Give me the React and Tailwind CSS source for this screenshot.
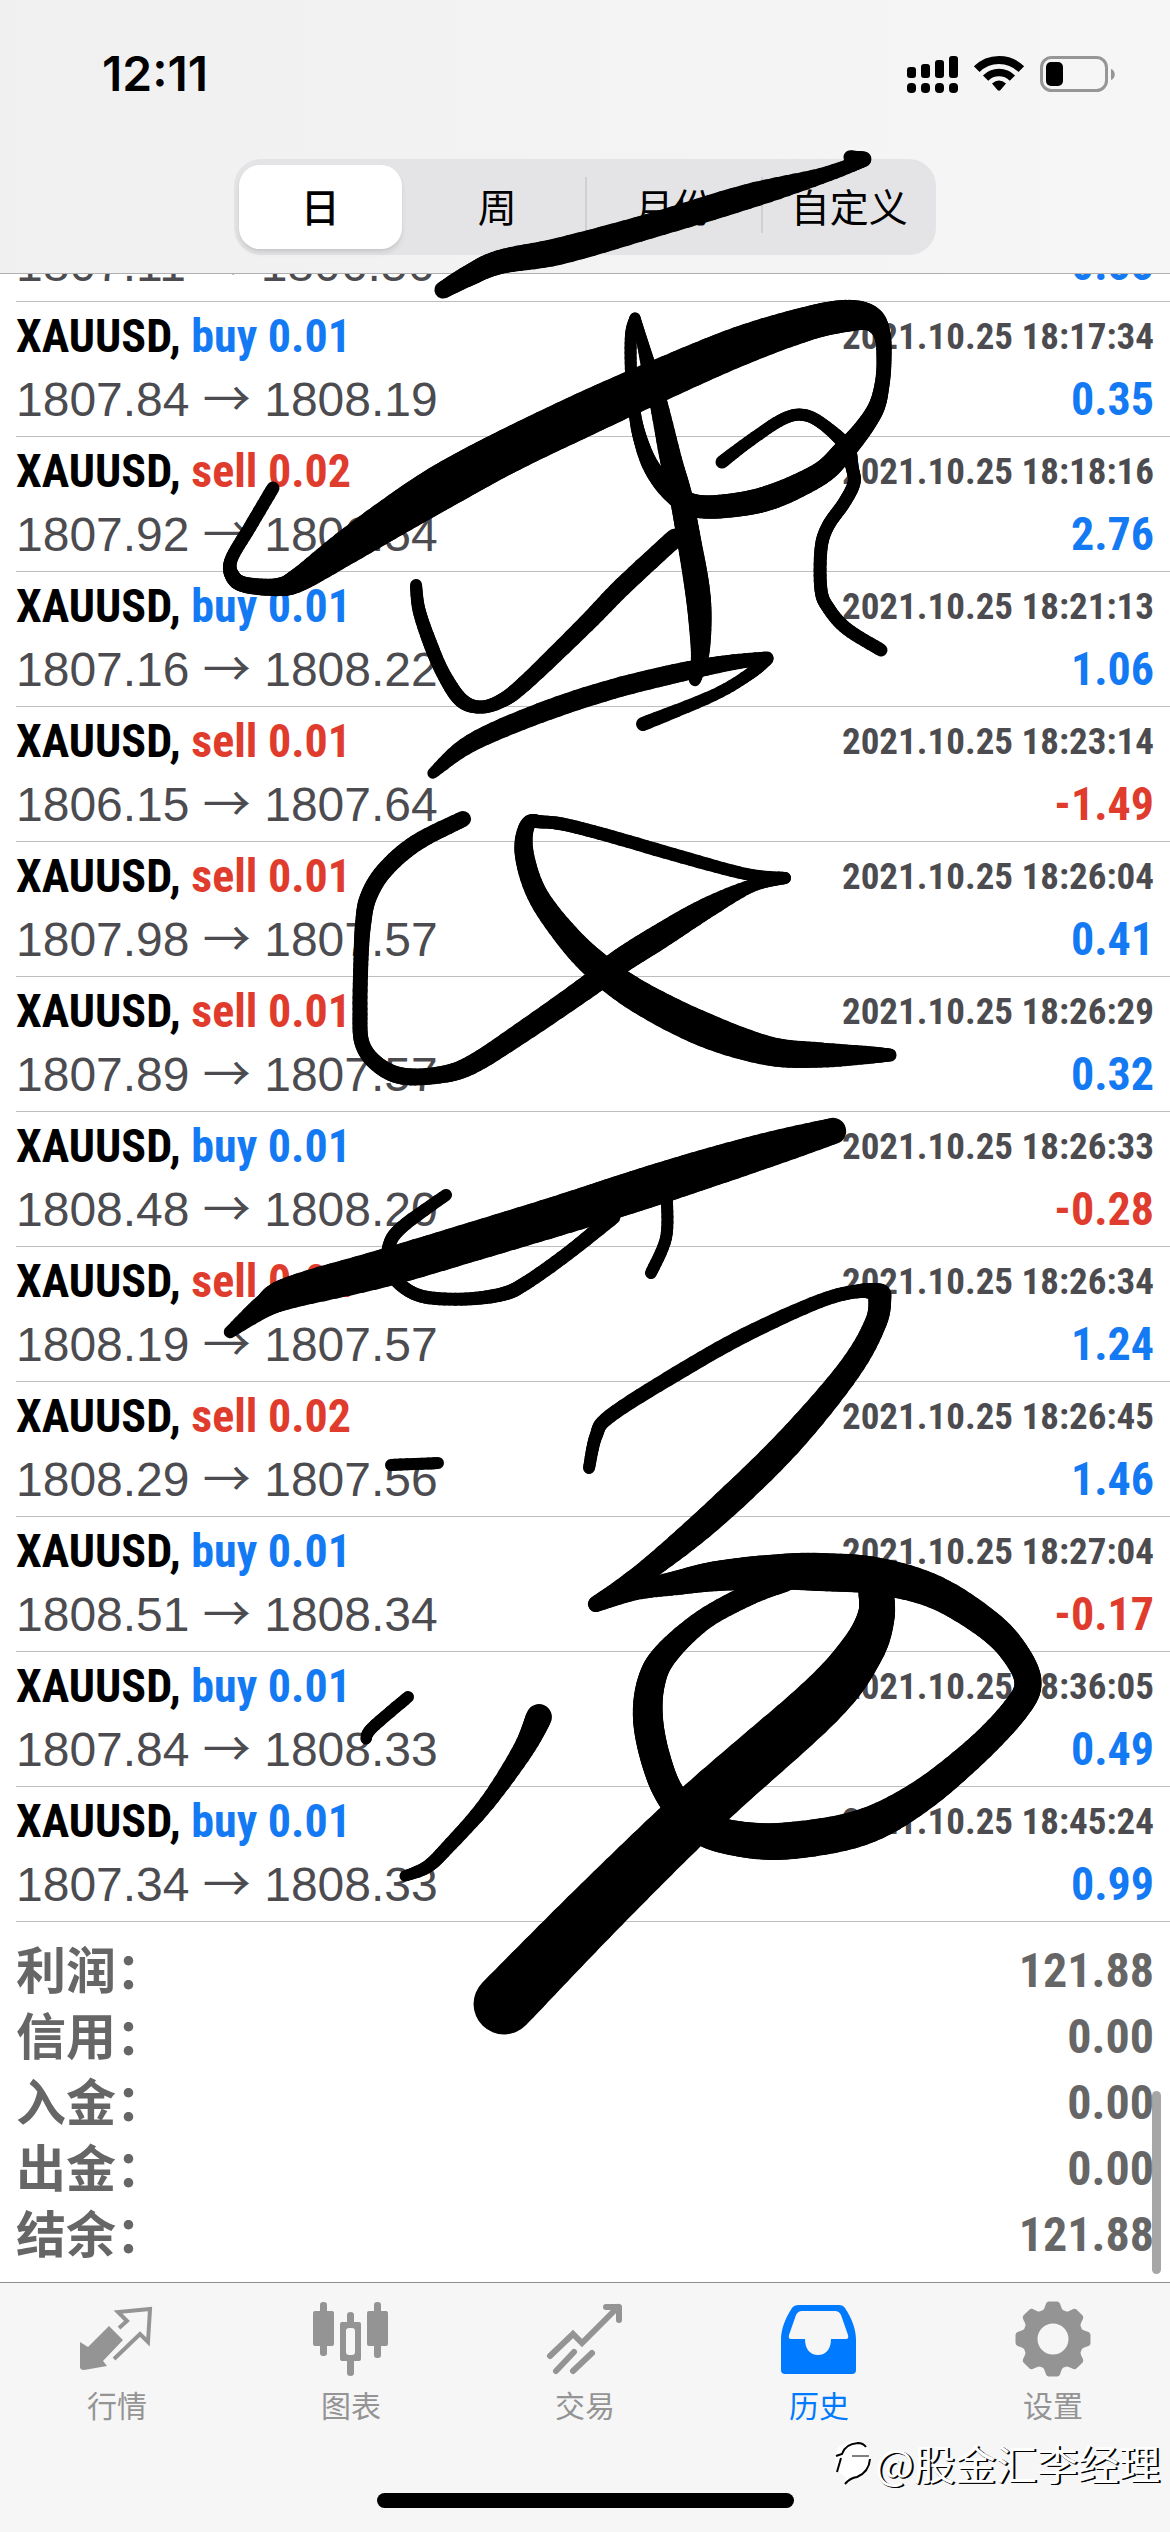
import React from 'react';

const deals = [
  { side: 'sell', volume: '0.01', time: '2021.10.25 18:16:02', open: '1807.11', close: '1806.56', profit: '0.55' },
  { side: 'buy', volume: '0.01', time: '2021.10.25 18:17:34', open: '1807.84', close: '1808.19', profit: '0.35' },
  { side: 'sell', volume: '0.02', time: '2021.10.25 18:18:16', open: '1807.92', close: '1806.54', profit: '2.76' },
  { side: 'buy', volume: '0.01', time: '2021.10.25 18:21:13', open: '1807.16', close: '1808.22', profit: '1.06' },
  { side: 'sell', volume: '0.01', time: '2021.10.25 18:23:14', open: '1806.15', close: '1807.64', profit: '-1.49' },
  { side: 'sell', volume: '0.01', time: '2021.10.25 18:26:04', open: '1807.98', close: '1807.57', profit: '0.41' },
  { side: 'sell', volume: '0.01', time: '2021.10.25 18:26:29', open: '1807.89', close: '1807.57', profit: '0.32' },
  { side: 'buy', volume: '0.01', time: '2021.10.25 18:26:33', open: '1808.48', close: '1808.20', profit: '-0.28' },
  { side: 'sell', volume: '0.02', time: '2021.10.25 18:26:34', open: '1808.19', close: '1807.57', profit: '1.24' },
  { side: 'sell', volume: '0.02', time: '2021.10.25 18:26:45', open: '1808.29', close: '1807.56', profit: '1.46' },
  { side: 'buy', volume: '0.01', time: '2021.10.25 18:27:04', open: '1808.51', close: '1808.34', profit: '-0.17' },
  { side: 'buy', volume: '0.01', time: '2021.10.25 18:36:05', open: '1807.84', close: '1808.33', profit: '0.49' },
  { side: 'buy', volume: '0.01', time: '2021.10.25 18:45:24', open: '1807.34', close: '1808.33', profit: '0.99' },
];

const totals = [
  { label: '利润：', value: '121.88' },
  { label: '信用：', value: '0.00' },
  { label: '入金：', value: '0.00' },
  { label: '出金：', value: '0.00' },
  { label: '结余：', value: '121.88' },
];

const periods = ['日', '周', '月份', '自定义'];

// pen strokes, every point is [x, y, pen width]
const strokes = [
  [[443, 290, 16], [468, 276, 20], [500, 262, 23], [560, 251, 26], [650, 226, 24], [746, 197, 24], [821, 176, 15], [864, 160, 13]],
  [[864, 159, 14], [850, 157, 12]],
  [[273, 488, 12], [250, 527, 12], [231, 560, 12], [233, 577, 14], [246, 585, 15], [278, 587, 17], [300, 579, 23], [347, 547, 33], [407, 508, 41], [452, 481, 44], [510, 450, 43], [585, 414, 43], [660, 380, 41], [740, 346, 38], [806, 324, 33], [845, 316, 31], [870, 318, 24], [882, 334, 16], [884, 360, 14], [882, 385, 14], [876, 408, 16], [862, 430, 18], [843, 452, 21], [820, 474, 22], [774, 496, 24], [735, 505, 23], [696, 506, 22], [672, 492, 20], [652, 468, 16], [640, 438, 13], [634, 408, 11], [631, 373, 11], [631, 335, 11], [635, 318, 10]],
  [[635, 318, 10], [641, 337, 10], [649, 368, 14], [659, 405, 17], [671, 460, 21], [681, 497, 22], [689, 540, 23], [697, 587, 24], [700, 620, 22], [700, 655, 17], [695, 680, 11]],
  [[416, 585, 11], [419, 610, 12], [430, 643, 13], [443, 673, 13], [460, 699, 14], [478, 707, 12], [499, 702, 13], [524, 684, 15], [586, 624, 17], [622, 587, 18], [675, 538, 18]],
  [[433, 773, 10], [471, 743, 17], [540, 713, 19], [613, 689, 19], [682, 672, 18], [728, 663, 15], [767, 658, 12]],
  [[767, 659, 12], [751, 673, 11], [714, 695, 11], [643, 724, 13]],
  [[722, 462, 12], [751, 440, 11], [783, 419, 11], [804, 415, 11], [824, 425, 11], [847, 447, 13], [852, 467, 12], [854, 483, 12], [844, 503, 12], [828, 526, 12], [821, 549, 12], [821, 590, 12], [829, 609, 12], [847, 629, 12], [881, 650, 12]],
  [[463, 819, 15], [416, 843, 16], [384, 871, 16], [368, 898, 16], [363, 925, 15], [361, 959, 14], [360, 1009, 14], [362, 1043, 14], [377, 1064, 15], [402, 1076, 16], [439, 1075, 16], [471, 1065, 18], [521, 1033, 20], [590, 985, 22], [618, 963, 24], [659, 937, 24], [705, 909, 20], [751, 886, 12], [785, 878, 11]],
  [[785, 878, 11], [746, 874, 11], [682, 857, 12], [613, 837, 12], [567, 825, 12], [543, 822, 12], [528, 824, 14], [524, 852, 18], [537, 894, 20], [567, 936, 24], [599, 968, 28], [641, 998, 31], [705, 1030, 33], [769, 1051, 28], [820, 1055, 24], [866, 1055, 17], [890, 1055, 12]],
  [[230, 1332, 11], [264, 1306, 22], [292, 1292, 31], [384, 1268, 37], [475, 1241, 38], [567, 1213, 39], [636, 1191, 40], [705, 1169, 38], [774, 1148, 33], [833, 1131, 25]],
  [[446, 1195, 11], [402, 1227, 12], [389, 1246, 12], [389, 1269, 12], [402, 1286, 12], [425, 1297, 12], [466, 1299, 12], [503, 1294, 13], [526, 1283, 13], [567, 1254, 13], [613, 1217, 14]],
  [[667, 1200, 11], [666, 1238, 11], [651, 1273, 11]],
  [[589, 1468, 11], [596, 1436, 12], [610, 1416, 13], [676, 1374, 14], [745, 1335, 14], [820, 1301, 13], [860, 1291, 13], [880, 1293, 18]],
  [[880, 1295, 22], [876, 1322, 21], [849, 1370, 23], [788, 1443, 27], [717, 1512, 27], [659, 1561, 22], [625, 1585, 17], [596, 1604, 15]],
  [[596, 1604, 15], [636, 1591, 17], [676, 1583, 23], [717, 1576, 29], [774, 1572, 34], [820, 1572, 37], [877, 1576, 36], [935, 1592, 32], [987, 1624, 29], [1015, 1653, 27], [1028, 1683, 26], [1015, 1710, 26], [975, 1752, 27], [918, 1798, 31], [860, 1828, 35], [786, 1841, 36], [734, 1838, 34], [699, 1826, 32], [671, 1796, 29], [656, 1760, 29], [648, 1719, 29], [651, 1683, 27], [665, 1655, 24], [703, 1620, 20], [751, 1594, 20], [786, 1582, 18]],
  [[876, 1592, 34], [876, 1617, 36], [861, 1652, 43], [819, 1703, 50], [704, 1805, 54], [602, 1904, 57], [504, 2004, 60]],
  [[391, 1465, 11], [438, 1463, 11]],
  [[366, 1739, 10], [372, 1728, 11], [408, 1697, 11]],
  [[539, 1717, 25], [523, 1750, 20], [487, 1803, 15], [447, 1848, 13], [427, 1867, 12], [405, 1876, 10]],
];

const STEPS = 8;

const spline = (a, b, c, d, t) =>
  0.5 * (2 * b + (c - a) * t + (2 * a - 5 * b + 4 * c - d) * t * t + (3 * b - a - 3 * c + d) * t * t * t);

const samplePoints = (points) => {
  const out = [];
  for (let i = 0; i < points.length - 1; i++) {
    const a = points[i - 1] || points[i];
    const b = points[i];
    const c = points[i + 1];
    const d = points[i + 2] || c;
    for (let s = 0; s < STEPS; s++) {
      out.push([0, 1, 2].map((k) => spline(a[k], b[k], c[k], d[k], s / STEPS)));
    }
  }
  out.push(points[points.length - 1]);
  return out;
};

const PenStroke = ({ points }) => {
  const samples = samplePoints(points);
  return (
    <g>
      {samples.slice(1).map((p, index) => (
        <line
          key={index}
          x1={samples[index][0]}
          y1={samples[index][1]}
          x2={p[0]}
          y2={p[1]}
          strokeWidth={(samples[index][2] + p[2]) / 2 + 1}
        />
      ))}
    </g>
  );
};

const Scribble = () => (
  <svg
    viewBox="0 0 1170 2532"
    className="absolute inset-0 w-full h-full pointer-events-none"
    stroke="#000"
    strokeLinecap="round"
    aria-hidden="true"
  >
    {strokes.map((points, index) => (
      <PenStroke key={index} points={points} />
    ))}
  </svg>
);

const StatusIcons = () => (
  <svg width="220" height="44" viewBox="0 0 220 44" aria-hidden="true">
    {[15, 12, 8, 4].map((top, index) => (
      <g key={top}>
        <rect x={7 + index * 14} y={top} width="9" height={26 - top} rx="3" />
        <rect x={7 + index * 14} y="31" width="9" height="10" rx="4" />
      </g>
    ))}
    <g fill="none" stroke="#000">
      <path d="M76.700 17.200A31.500 31.500 0 0 1 121.300 17.200" strokeWidth="8" />
      <path d="M85.600 26.100A19 19 0 0 1 112.400 26.100" strokeWidth="7.500" />
    </g>
    <path d="M92 31.500Q99 25.500 106 31.500L100.500 38Q99 39.500 97.500 38Z" />
    <rect x="141.500" y="5.500" width="65" height="33" rx="10" fill="none" stroke="#969696" strokeWidth="3" />
    <rect x="146" y="10" width="17" height="24" rx="5" />
    <path d="M211 17C216 18.500 216 26.500 211 28Z" fill="#969696" />
  </svg>
);

const QuotesIcon = () => (
  <svg width="90" height="84" viewBox="0 0 90 84" aria-hidden="true">
    <path d="M8 46L16 51L37 30L51 44L31 65L35 70L12 74Q8 74 8 71Z" fill="currentColor" />
    <path d="M47 32L55 25L46 16L78 13L76 46L68 38L42 63" fill="none" stroke="currentColor" strokeWidth="4" />
  </svg>
);

const ChartIcon = () => (
  <svg width="90" height="84" viewBox="0 0 90 84" fill="currentColor" aria-hidden="true">
    <rect x="7" y="15" width="21" height="35" rx="2" />
    <rect x="14" y="6" width="7" height="54" rx="3" />
    <rect x="61" y="15" width="21" height="35" rx="2" />
    <rect x="68" y="6" width="7" height="56" rx="3" />
    <path fillRule="evenodd" d="M36 26H53Q55 26 55 28V63Q55 65 53 65H36Q34 65 34 63V28Q34 26 36 26ZM43 32Q40 32 40 35V56Q40 59 43 59H46Q49 59 49 56V35Q49 32 46 32Z" />
    <path d="M41 28V19Q41 16 44.500 16T48 19V28ZM41 62V77Q41 80 44.500 80T48 77V62Z" />
  </svg>
);

const TradeIcon = () => (
  <svg width="90" height="84" viewBox="0 0 90 84" fill="none" stroke="currentColor" strokeWidth="6" strokeLinecap="round" aria-hidden="true">
    <path d="M10 60L33 38L42 47L78 11" />
    <path d="M66 11H79V24" strokeLinejoin="round" />
    <path d="M34 56L16 75M52 57L33 75" />
  </svg>
);

const HistoryIcon = () => (
  <svg width="90" height="84" viewBox="0 0 90 84" fill="currentColor" aria-hidden="true">
    <path
      fillRule="evenodd"
      d="M25 9H65Q69 9 71 12C78 23 82 33 82 44V74Q82 78 78 78H11Q7 78 7 74V44C7 33 11 23 18 12Q20 9 25 9ZM28 15Q24 15 22 19L15 39Q14 43 17 43H31C31 53 36 59 44 59S57 53 57 43H72Q75 43 74 39L67 19Q65 15 61 15Z"
    />
  </svg>
);

const SettingsIcon = () => (
  <svg width="90" height="84" viewBox="0 0 90 84" aria-hidden="true">
    <circle cx="45" cy="43" r="23" fill="none" stroke="currentColor" strokeWidth="15" />
    {[0, 45, 90, 135, 180, 225, 270, 315].map((angle) => (
      <path
        key={angle}
        d="M31 18Q36 15 37.500 9Q38.500 5.500 41 5.500H49Q51.500 5.500 52.500 9Q54 15 59 18Z"
        fill="currentColor"
        transform={`rotate(${angle} 45 43)`}
      />
    ))}
  </svg>
);

const tabs = [
  { label: '行情', icon: QuotesIcon },
  { label: '图表', icon: ChartIcon },
  { label: '交易', icon: TradeIcon },
  { label: '历史', icon: HistoryIcon, active: true },
  { label: '设置', icon: SettingsIcon },
];

const DealRow = ({ deal }) => (
  <li className="ml-4 shrink-0 border-b border-[#bdbdc0] pt-[3px] pb-[5px] pr-4 leading-[63px] whitespace-nowrap">
    <div className="flex h-[63px] justify-between font-['Roboto_Condensed','Liberation_Sans',sans-serif] font-bold">
      <span className="text-[46px]">
        XAUUSD,{' '}
        <span className={deal.side === 'buy' ? 'text-[#147af3]' : 'text-[#e03c2d]'}>
          {deal.side} {deal.volume}
        </span>
      </span>
      <span className="text-[37px] text-[#4c4c50]">{deal.time}</span>
    </div>
    <div className="flex h-[63px] justify-between text-[48px]">
      <span className="text-[#4c4c50]">
        {deal.open} <span className="font-['Noto_Sans_CJK_SC',sans-serif] leading-none">→</span> {deal.close}
      </span>
      <span
        className={`font-['Roboto_Condensed','Liberation_Sans',sans-serif] text-[46px] font-bold ${
          deal.profit.startsWith('-') ? 'text-[#e03c2d]' : 'text-[#147af3]'
        }`}
      >
        {deal.profit}
      </span>
    </div>
  </li>
);

const App = () => (
  <div className="relative flex h-screen flex-col overflow-hidden bg-white font-['Liberation_Sans','Noto_Sans_CJK_SC',sans-serif] text-black">
    <header className="shrink-0 border-b border-[#b0b0b2] bg-linear-to-r from-[#f0f0f0] to-[#f6f6f7] pt-[52px] pb-[18px]">
      <div className="flex h-11 items-center justify-between pl-[102px] pr-[50px]">
        <span className="font-['Inter',sans-serif] text-[48px] font-semibold leading-[44px]">12:11</span>
        <StatusIcons />
      </div>
      <div className="mx-auto mt-[63px] grid h-24 w-3/5 grid-cols-4 rounded-[27px] bg-[#e4e4e6] font-['Noto_Sans_CJK_SC',sans-serif] text-[39px] leading-[48px]">
        {periods.map((period, index) => (
          <button
            key={period}
            type="button"
            className={`flex items-center pb-1 ${
              index === 0 ? 'my-[6px] ml-[5px] mr-2 rounded-[21px] bg-white font-medium shadow-md' : ''
            }`}
          >
            {index > 1 && <span className="h-14 w-0.5 bg-[#d0d0d4]" />}
            <span className="flex-1">{period}</span>
          </button>
        ))}
      </div>
    </header>

    <main className="relative flex min-h-0 flex-1 flex-col justify-end overflow-hidden">
      <ul className="flex flex-col">
        {deals.map((deal) => (
          <DealRow key={deal.time} deal={deal} />
        ))}
      </ul>
      <dl className="px-4 pt-3 pb-[18px] font-bold leading-[66px] text-[#666666]">
        {totals.map((total) => (
          <div key={total.label} className="flex h-[66px] justify-between">
            <dt className="font-['Noto_Sans_CJK_JP',sans-serif] text-[50px]" lang="zh-CN">{total.label}</dt>
            <dd className="pt-1 font-['Roboto_Condensed','Liberation_Sans',sans-serif] text-[48px]">{total.value}</dd>
          </div>
        ))}
      </dl>
      <div className="absolute right-[9px] bottom-2 h-[183px] w-[9px] rounded-full bg-black/35" />
    </main>

    <nav className="shrink-0 border-t border-[#8e8e90] bg-[#f6f6f6] pt-[13px] pb-6">
      <div className="grid grid-cols-5">
        {tabs.map(({ label, icon: Icon, active }) => (
          <button
            key={label}
            type="button"
            className={`flex flex-col items-center gap-1 font-['Noto_Sans_CJK_SC',sans-serif] text-[30px] leading-[40px] ${
              active ? 'text-[#007aff]' : 'text-[#949494]'
            }`}
          >
            <Icon />
            {label}
          </button>
        ))}
      </div>
      <div className="mx-auto mt-[69px] h-[15px] w-[417px] rounded-full bg-black" />
    </nav>

    <Scribble />

    <div className="absolute right-[10px] bottom-[46px] flex h-12 items-center gap-[2px] font-['Noto_Sans_CJK_SC',sans-serif] text-[41px] leading-[48px] text-white [text-shadow:1px_1px_0_#000,2px_1px_0_#000]">
      <svg width="40" height="48" viewBox="0 0 40 48" fill="none" aria-hidden="true">
        <path d="M2 18Q4 3 22 3Q36 5 37 20Q37 34 22 39L12 46L13 39Q2 34 2 18Z" fill="#fff" />
        <path d="M3 18L9 16Q12 6 25 5Q30 5 33 9M8 20L4 34M37 21Q36 34 24 39Q17 40 12 46" stroke="#000" strokeWidth="2" />
        <path d="M19 18H36" stroke="#000" />
      </svg>
      <span>@股金汇李经理</span>
    </div>
  </div>
);

export default App;
